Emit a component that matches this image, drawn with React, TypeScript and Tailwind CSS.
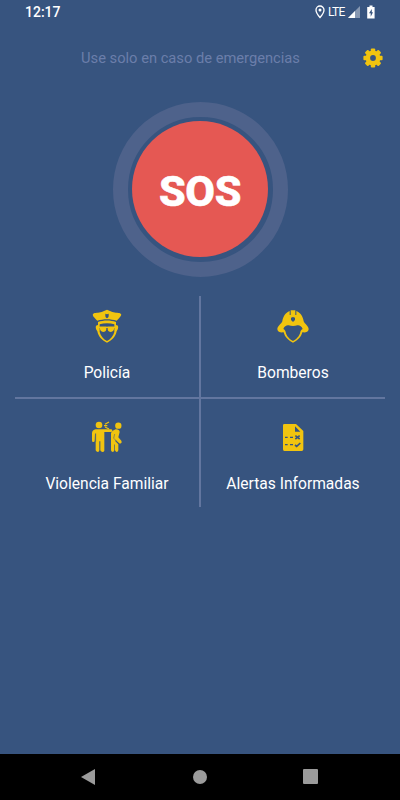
import type { ReactNode } from 'react';

const PoliceIcon = () => (
    <svg viewBox="30 24 102 108" className="w-[34px] h-9" fill="#f1c40f">
        <path
            fillRule="evenodd"
            d="M81 29 L97 36 C106 39 118 37 123 42 C126 46 118 54 110 62 C92 56 70 56 52 62 C44 54 36 47 39 42 C44 37 56 39 65 36 Z M76 41 L76 49 Q77 53 81 55 Q85 53 86 49 L86 41 L81 43 Z"
        />
        <path
            fillRule="evenodd"
            d="M54 66 C71 60 91 60 108 66 L108 75 C116 75 117 84 110 94 C107 110 95 122 81 128 C67 122 55 110 52 94 C45 84 46 75 54 75 Z M59 73 V96 C62 108 70 118 81 123 C92 118 100 108 103 96 V73 C90 69 72 69 59 73 Z"
        />
        <path d="M56 80 H106 V84 H56 Z" />
        <path d="M60 80 H79 V88 Q78 96 69 96 Q61 95 60 88 Z M83 80 H102 V88 Q101 95 93 96 Q84 96 83 88 Z" />
    </svg>
);

const FirefighterIcon = () => (
    <svg viewBox="30 24 102 108" className="w-[34px] h-9" fill="#f1c40f">
        <path
            fillRule="evenodd"
            d="M74 31 H88 V45 H91 V33 C104 38 111 50 113 64 C116 72 128 78 128 88 C127 97 118 98 109 97 C106 110 95 122 81 128 C67 122 56 110 53 97 C44 98 35 97 34 88 C34 78 46 72 49 64 C51 50 58 38 71 33 V45 H74 Z M75 53 L75 60 L81 66 L87 60 L87 53 L81 51 Z M52 87 C56 89 58 92 59 96 C61 108 71 118 81 123 C91 118 101 108 103 96 C104 92 106 89 110 87 C107 78 100 75 94 76 C86 79 76 79 68 76 C62 75 55 78 52 87 Z"
        />
    </svg>
);

const ViolenceIcon = () => (
    <svg viewBox="30 24 102 108" className="w-[34px] h-9" fill="#f1c40f">
        <circle cx="57" cy="39" r="10" />
        <circle cx="115" cy="41" r="9.5" />
        <path d="M47 52 H94 Q97 53 97 57 Q96 60 93 60 H73 V116 Q72 120 67 120 Q62 119 61 115 V88 H58 V115 Q58 120 53 120 Q48 119 47 115 V65 H45 L44 88 Q42 91 37 89 Q36 88 36 84 V63 Q37 54 47 52 Z" />
        <path d="M104 53 C110 50 119 53 119 60 L115 76 L124 86 Q127 91 123 94 Q119 96 116 92 L106 84 L106 88 L115 97 V115 Q114 120 110 120 Q106 119 105 115 V99 L103 96 V115 Q102 120 98 120 Q93 119 93 115 V63 Q96 55 104 53 Z" />
        <path d="M47 64 V89 M104 66 L101 79 L112 89" fill="none" stroke="#37547f" strokeWidth="1.5" />
        <path
            d="M75 37 L87 30 M72 41 H82 M75 45 L87 51"
            fill="none"
            stroke="#f1c40f"
            strokeWidth="3.5"
        />
    </svg>
);

const ReportIcon = () => (
    <svg viewBox="30 24 102 108" className="w-[34px] h-9" fill="#f1c40f">
        <path
            fillRule="evenodd"
            d="M55 36 H90 L112 57 V112 Q112 117 107 117 H55 Q51 117 51 112 V40 Q51 36 55 36 Z M87 43 V59 H103 Z"
        />
        <path
            d="M57 76 H65 M72 76 H81 M57 98 H65 M72 98 H81"
            stroke="#37547f"
            strokeWidth="4"
        />
        <path
            d="M88 71 L101 81 M101 71 L88 81 M87 99 L92 103 L103 93"
            fill="none"
            stroke="#37547f"
            strokeWidth="5"
        />
    </svg>
);

const StatusBar = () => (
    <div className="flex h-6 items-center justify-between px-[25px] text-white">
        <span className="text-[14px] font-medium leading-6">12:17</span>
        <div className="flex items-center">
            <svg viewBox="0 0 10 14" className="h-[14px] w-[10px]">
                <path
                    d="M5 1 A4 4 0 0 0 1 5 C1 8 5 12.5 5 12.5 C5 12.5 9 8 9 5 A4 4 0 0 0 5 1 Z"
                    fill="none"
                    stroke="white"
                    strokeWidth="1.3"
                />
                <circle cx="5" cy="5" r="1.5" fill="white" />
            </svg>
            <span className="ml-[3px] w-[20px] text-[12px] leading-6 tracking-[-0.8px]">LTE</span>
            <svg viewBox="0 0 12 12" className="h-3 w-3">
                <path d="M12 0 V12 H0 Z" fill="#8798b2" />
                <path d="M7 5 V12 H0 Z" fill="white" />
            </svg>
            <svg viewBox="0 0 8 14" className="ml-[7px] h-[14px] w-2">
                <path d="M2.5 .5 H5.5 V2 H7.6 V13.5 H0.2 V2 H2.5 Z" fill="white" />
                <path d="M4.8 4 L2 8.3 H3.7 V11.8 L6 7.2 H4.8 Z" fill="#37547f" />
            </svg>
        </div>
    </div>
);

const GearIcon = () => (
    <svg viewBox="-10 -10 20 20" className="h-5 w-5" fill="#f1c40f">
        {[0, 45, 90, 135].map((angle) => (
            <rect key={angle} x="-2.2" y="-9.6" width="4.4" height="19.2" rx="1" transform={`rotate(${angle})`} />
        ))}
        <circle r="7.4" />
        <circle r="2.9" fill="#37547f" />
    </svg>
);

const Option = ({ label, children, className }: { label: string; children: ReactNode; className: string }) => (
    <button className={`flex flex-col items-center border-[#62769f] text-white ${className}`}>
        {children}
        <span className="text-[15.6px] leading-6">{label}</span>
    </button>
);

export default function App() {
    return (
        <div className="flex h-[800px] w-[400px] flex-col bg-[#37547f] font-['Roboto',sans-serif]">
            <StatusBar />

            {/* Header */}
            <header className="grid h-[68px] grid-cols-[41px_1fr_60px] items-center">
                <p className="col-start-2 whitespace-nowrap text-center text-[14.7px] text-[#6b7eaa]">
                    Use solo en caso de emergencias
                </p>
                <button className="ml-[23px] w-5" aria-label="Ajustes">
                    <GearIcon />
                </button>
            </header>

            {/* SOS button */}
            <div className="mx-auto mt-[9.5px] flex size-[175px] items-center justify-center rounded-full border-[15px] border-[#4e628b]">
                <button className="size-[136px] rounded-full bg-[#e55853] pt-[5px] text-[43px] font-extrabold leading-none tracking-[-0.4px] text-white [-webkit-text-stroke:0.6px_white]">
                    SOS
                </button>
            </div>

            {/* Options */}
            <main className="mx-[15px] mt-[19.5px] grid h-[211px] grid-cols-[186px_184px] grid-rows-[103px_108px]">
                <Option label="Policía" className="gap-[17px] border-b-2 border-r-2 pt-3">
                    <PoliceIcon />
                </Option>
                <Option label="Bomberos" className="gap-[17px] border-b-2 pt-3">
                    <FirefighterIcon />
                </Option>
                <Option label="Violencia Familiar" className="gap-4 border-r-2 pt-[21px]">
                    <ViolenceIcon />
                </Option>
                <Option label="Alertas Informadas" className="gap-4 pt-[21px]">
                    <ReportIcon />
                </Option>
            </main>

            {/* Android navigation */}
            <nav className="mt-auto flex h-[46px] items-center justify-between bg-black pb-px pl-[81px] pr-[82px]">
                <svg viewBox="0 0 14 16" className="h-4 w-[14px]">
                    <path d="M14 0 V16 L0 8 Z" fill="#9b9b9b" />
                </svg>
                <span className="ml-px size-[14px] rounded-full bg-[#9b9b9b]" />
                <span className="size-[15px] rounded-[1px] bg-[#9b9b9b]" />
            </nav>
        </div>
    );
}
